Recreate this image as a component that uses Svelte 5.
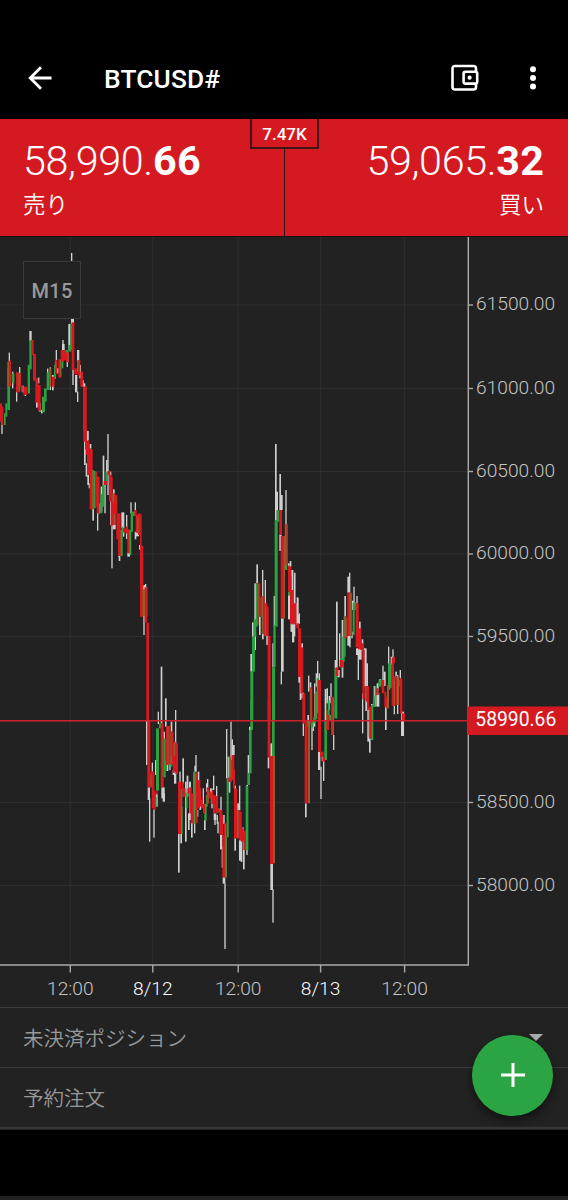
<script>
  const priceTicks = [
    [305, '61500.00'], [388.5, '61000.00'], [471.5, '60500.00'], [554, '60000.00'],
    [636.5, '59500.00'], [802.5, '58500.00'], [885.5, '58000.00']
  ];
  const timeTicks = [
    [70.3, '12:00', false], [152.8, '8/12', true], [238.2, '12:00', false],
    [320.6, '8/13', true], [404.6, '12:00', false]
  ];

  // Sections of the price history. Each bar is [x, top, bottom, width] in thirds of a pixel;
  // the section origin is in pixels.
  const sections = [
    {
      x: 0, y: 235,
      w: [[213,54,78,4],[4,540,597,4],[26,353,380,4],[36,410,460,4],[48,470,500,4],[57,396,415,4],[67,452,472,4],[74,475,483,4],[88,288,318,7],[99,357,362,6],[113,428,445,5],[108,500,518,5],[117,505,530,5],[123,525,535,5],[141,401,440,4],[149,397,465,4],[156,420,466,5],[167,345,380,4],[171,400,415,5],[187,315,345,4],[186,327,352,8],[193,345,370,5],[200,375,396,4],[205,267,345,6],[213,250,267,9],[217,405,450,4],[225,420,472,7],[231,470,501,4],[231,345,378,7],[238,390,430,5],[245,435,455,6],[251,445,460,5],[260,588,620,5]],
      g: [[12,535,570,5],[16,505,545,6],[22,400,525,8],[35,415,445,8],[83,390,475,7],[88,315,403,7],[126,485,532,9],[132,460,500,8],[140,412,465,7],[162,390,432,6],[184,350,400,6],[197,345,375,7],[205,330,350,9],[211,265,345,6]],
      r: [[0,505,560,6],[4,515,570,6],[25,377,455,8],[48,412,472,8],[56,415,455,7],[62,452,470,6],[70,455,480,12],[94,315,360,7],[99,357,437,9],[106,430,503,9],[114,450,528,8],[156,425,455,8],[165,375,418,7],[175,373,428,9],[182,345,380,10],[192,345,376,6],[198,353,382,9],[215,262,405,8],[223,400,418,9],[233,375,422,8],[241,410,455,8],[249,455,590,10],[252,585,618,8],[256,617,660,12]],
      o: [[22,380,455,5],[55,415,470,5],[149,400,455,5],[164,380,400,5],[180,375,425,4],[202,350,380,4],[231,377,410,5]]
    },
    {
      x: 75, y: 370,
      w: [[27,210,285,5],[32,280,320,6],[36,183,210,5],[37,310,345,5],[41,340,355,4],[44,222,236,5],[52,415,452,5],[66,425,482,4],[71,400,430,5],[77,350,425,5],[83,257,350,5],[88,340,430,4],[93,270,310,5],[97,192,375,4],[102,305,315,7],[105,380,465,4],[109,465,595,4],[114,358,374,5],[113,465,478,9],[129,505,560,5],[131,555,573,5],[139,427,475,9],[144,485,500,4],[153,435,507,4],[157,548,560,8],[166,397,430,4],[179,397,430,4],[179,485,508,5],[183,487,499,9],[192,525,539,6],[205,645,660,8]],
      g: [[57,303,415,5],[76,372,430,6],[81,345,410,7],[91,305,345,8],[135,480,558,8],[140,470,490,5],[164,480,555,5],[167,425,485,7],[173,425,438,6]],
      r: [[25,50,215,10],[30,215,238,9],[36,235,315,10],[44,237,418,9],[60,305,410,7],[65,320,430,9],[86,333,345,10],[98,303,315,8],[102,315,395,8],[107,320,467,6],[111,370,465,10],[119,375,430,8],[124,430,508,7],[129,430,558,8],[144,475,487,10],[152,470,490,6],[157,478,550,7],[178,420,438,7],[182,435,488,8],[189,430,495,7],[195,433,740,5],[195,528,740,10],[208,652,740,10]],
      o: [[51,300,417,6],[112,372,395,6],[116,432,465,6],[186,440,490,5],[162,480,550,3]]
    },
    {
      x: 110, y: 580,
      w: [[100,20,165,4],[105,12,28,4],[108,420,555,5],[113,622,660,7],[117,655,785,4],[125,548,575,4],[130,688,773,4],[135,540,585,5],[137,640,680,6],[143,395,432,4],[152,260,430,5],[154,622,655,10],[158,640,665,7],[160,455,480,5],[165,355,440,5],[169,555,573,6],[178,550,570,4],[182,425,455,5],[188,570,585,8],[192,575,611,7],[195,390,492,4],[204,760,878,5],[208,575,610,4],[211,760,790,5],[217,535,610,5],[225,605,785,5],[230,587,650,5],[237,605,720,6],[234,700,750,5],[243,715,773,5],[252,730,760,4],[253,557,575,5],[256,525,575,4],[263,575,600,5],[260,690,710,5],[268,680,690,5]],
      g: [[119,595,622,4],[133,650,680,7],[138,445,632,9],[147,430,445,6],[160,475,592,7],[166,540,570,5],[179,528,560,8],[213,680,762,5],[218,625,650,5],[227,638,685,6],[249,575,730,8]],
      r: [[91,0,108,8],[104,22,128,7],[109,128,422,8],[112,422,622,9],[121,575,622,7],[125,575,685,8],[131,632,690,6],[139,632,645,4],[152,430,622,9],[168,437,555,8],[175,438,552,7],[184,455,555,7],[189,485,578,8],[196,490,582,8],[204,605,762,9],[214,605,630,7],[218,625,650,9],[232,625,640,7],[238,622,700,7],[242,640,730,9],[255,577,730,8],[262,600,685,9]],
      o: [[97,28,108,8],[122,580,620,3],[157,480,590,3],[172,440,555,4],[181,455,550,4],[191,490,528,5],[212,627,710,5],[254,580,690,4]]
    },
    {
      x: 200, y: 700,
      w: [[0,300,326,4],[8,265,315,4],[12,360,390,5],[21,237,265,4],[18,250,275,4],[30,265,290,4],[34,265,325,4],[39,227,270,4],[41,340,360,8],[43,350,375,4],[48,258,290,4],[50,345,372,4],[52,365,400,4],[61,290,330,4],[60,405,448,7],[65,440,503,5],[69,345,372,5],[68,532,551,8],[73,550,747,4],[78,87,235,4],[83,170,235,4],[86,240,278,5],[91,65,180,4],[95,118,165,4],[98,135,165,6],[102,257,268,6],[103,415,452,5],[112,310,332,7],[117,257,330,4],[117,420,482,6],[122,420,486,5],[127,382,400,4],[129,420,508,5],[139,450,465,4],[143,165,220,5],[147,80,95,6],[139,255,270,5],[203,172,205,5],[211,130,170,5],[211,490,570,8],[217,568,668,4]],
      g: [[13,312,362,7],[18,285,320,5],[32,280,310,5],[55,325,338,5],[77,410,532,4],[80,235,412,6],[86,170,235,5],[94,180,235,5],[137,258,450,8],[142,220,255,8],[147,90,220,8],[151,0,90,8],[216,0,168,8]],
      r: [[0,265,320,4],[5,290,325,4],[9,312,340,6],[20,262,310,7],[26,275,295,8],[35,270,312,5],[39,285,340,8],[46,288,340,8],[52,325,335,6],[58,330,405,9],[65,345,405,5],[67,405,532,6],[72,370,532,4],[85,232,246,11],[96,165,240,7],[99,208,265,6],[102,265,415,9],[113,330,415,8],[118,335,422,7],[123,385,425,8],[130,393,450,8],[203,0,172,8],[210,168,492,9]],
      o: [[22,270,310,4],[75,370,532,4],[90,170,235,4],[111,330,415,5],[219,168,490,6]]
    },
    {
      x: 230, y: 430,
      w: [[61,672,725,5],[66,577,620,5],[73,460,660,5],[79,403,460,5],[87,560,615,5],[96,420,500,4],[96,610,628,5],[104,450,530,4],[109,617,645,8],[127,640,712,4],[131,498,590,4],[135,42,270,5],[138,185,240,6],[148,132,240,5],[152,195,240,6],[148,313,363,7],[166,180,285,4],[153,565,725,8],[152,725,763,4],[174,400,410,5],[179,393,410,4],[184,420,480,5],[174,488,568,8],[182,580,605,8],[186,585,637,7],[192,430,520,4],[199,520,585,5],[202,503,580,4],[206,550,580,4]],
      g: [[61,725,870,9],[66,620,725,9],[71,568,620,8],[77,460,590,6],[91,505,560,4],[126,712,870,9],[130,585,712,7],[134,270,590,9],[141,240,275,7],[162,405,420,10],[174,485,497,8]],
      r: [[83,460,560,8],[91,500,555,5],[98,500,612,6],[103,520,618,9],[110,530,618,6],[113,618,870,9],[148,240,315,8],[152,318,565,9],[164,283,405,10],[174,407,485,9],[182,440,580,8],[188,480,583,9],[194,520,580,6]],
      o: [[82,462,585,4],[95,500,612,4],[104,530,618,4],[160,318,565,5],[165,285,405,5]]
    },
    {
      x: 290, y: 560,
      w: [[0,3,20,4],[5,30,130,5],[12,38,150,4],[2,190,215,6],[7,190,245,5],[11,190,229,5],[20,112,190,4],[24,165,192,5],[25,350,368,8],[29,360,420,5],[34,250,265,5],[34,398,415,8],[38,490,528,4],[45,730,772,5],[54,347,395,4],[59,367,390,5],[52,465,495,5],[64,490,570,4],[68,480,513,4],[72,370,500,4],[77,340,380,6],[81,303,355,4],[86,340,362,4],[84,575,630,7],[91,620,717,4],[95,590,603,5],[99,600,663,4],[104,387,485,5],[109,385,430,5],[121,370,430,4],[116,408,450,4],[129,525,570,4],[138,125,350,5],[134,300,325,5],[147,220,320,4],[143,330,352,6],[155,180,353,5],[163,108,170,5],[172,50,98,5],[177,38,98,4],[172,228,257,8],[178,228,262,4],[184,215,235,4],[190,80,130,4],[186,122,150,4],[199,108,130,4],[207,185,215,5],[198,265,285,6],[203,265,360,4],[206,265,299,9],[216,400,520,4],[215,238,272,5],[222,265,380,8],[229,310,380,5],[226,418,453,5],[232,450,545,6],[237,535,578,5],[243,432,455,5],[251,378,440,6],[260,370,390,6],[259,400,440,9],[268,357,370,5],[277,317,370,4],[281,335,378,6],[285,425,510,5],[294,260,315,4],[302,290,315,5],[307,268,295,4],[311,435,463,4],[316,335,352,5],[321,345,462,4],[329,330,355,4],[333,455,528,9]],
      g: [[49,485,502,12],[64,480,502,6],[70,470,490,6],[75,395,478,7],[80,355,460,6],[103,480,600,8],[113,422,480,6],[118,465,480,5],[133,325,475,7],[138,325,475,4],[151,295,322,8],[157,230,305,7],[161,170,290,6],[188,130,225,6],[192,127,150,6],[243,435,540,7],[249,410,440,6],[254,378,410,5],[265,362,380,9],[294,310,390,6],[299,310,385,6],[270,358,375,5]],
      r: [[0,20,190,4],[3,90,193,8],[11,130,193,7],[19,190,205,8],[24,205,350,9],[31,262,400,9],[37,400,490,9],[44,485,730,9],[59,382,490,8],[84,360,575,9],[90,575,590,11],[97,592,605,8],[109,465,510,8],[123,410,525,9],[137,322,348,8],[149,300,322,10],[164,170,235,8],[172,98,228,9],[181,98,228,5],[197,130,262,9],[204,205,268,10],[211,250,270,9],[217,270,418,7],[228,378,425,7],[231,380,450,6],[237,440,535,8],[259,385,405,7],[275,360,400,8],[283,395,440,6],[287,410,445,7],[305,293,438,7],[309,290,310,6],[317,347,435,6],[323,360,380,8],[330,355,460,7],[335,460,482,10]],
      o: [[54,490,730,6],[61,385,490,4],[73,400,475,3],[108,450,485,5],[128,415,525,4],[165,175,230,5],[178,100,228,6],[225,378,418,4],[236,445,530,4],[261,385,405,4],[291,375,445,6],[311,350,438,5],[323,355,435,5]]
    }
  ];
  const layers = ['w', 'g', 'r', 'o'];
</script>

<main>
  <header>
    <svg class="back" width="26" height="26" viewBox="0 0 26 26"><path d="M24.500 13H3M14 2.200 3.200 13 14 23.800" /></svg>
    <h1>BTCUSD#</h1>
    <svg class="wallet" width="29" height="28" viewBox="0 0 29 28">
      <path d="M26 7.500V4.500Q26 2 23.500 2H5Q2.500 2 2.500 4.500V23Q2.500 25.500 5 25.500H23.500Q26 25.500 26 23V20" />
      <rect x="13.600" y="7.800" width="13.600" height="11.800" rx="1.800" />
      <circle cx="19.600" cy="13.700" r="2.100" />
    </svg>
    <svg class="more" width="8" height="26" viewBox="0 0 8 26">
      <circle cx="4" cy="4.200" r="3" /><circle cx="4" cy="12.900" r="3" /><circle cx="4" cy="21.600" r="3" />
    </svg>
  </header>

  <section class="quotes">
    <button class="quote sell"><span class="price">58,990.<b>66</b></span><span class="side">売り</span></button>
    <button class="quote buy"><span class="price">59,065.<b>32</b></span><span class="side">買い</span></button>
    <span class="spread">7.47K</span>
  </section>

  <section class="chart">
    <svg width="568" height="770" viewBox="0 237 568 770">
      <g class="grid">
        {#each priceTicks as [y]}<path d="M0 {y}H468" />{/each}
        {#each timeTicks as [x]}<path d="M{x} 237V965" />{/each}
      </g>
      {#each sections as s}
        <g transform="translate({s.x} {s.y}) scale(.33333)">
          {#each layers as layer}
            <g class={layer}>
              {#each s[layer] as [x, top, bottom, width]}
                <rect {x} y={top} {width} height={bottom - top} />
              {/each}
            </g>
          {/each}
        </g>
      {/each}
      <g class="axis">
        <path d="M468.300 237V965H0" />
        {#each priceTicks as [y]}<path d="M468 {y}h5" />{/each}
        {#each timeTicks as [x]}<path d="M{x} 965v7.500" />{/each}
      </g>
      {#each priceTicks as [y, label]}<text class="label" x="476" y={y + 5}>{label}</text>{/each}
      {#each timeTicks as [x, label, day]}<text class="label time" class:day {x} y="995.300">{label}</text>{/each}
      <path class="current" d="M0 720.700H468" />
      <rect class="tag" x="467.500" y="706.500" width="101" height="28.500" />
      <text class="tag-text" x="475.300" y="726.300">58990.66</text>
    </svg>
    <span class="period">M15</span>
  </section>

  <section class="orders">
    <div class="row"><span>未決済ポジション</span><i class="caret"></i></div>
    <div class="row"><span>予約注文</span></div>
    <div class="edge"></div>
  </section>
  <div class="navigation"></div>
  <button class="add" aria-label="+"><svg width="24" height="24" viewBox="0 0 24 24"><path d="M12 0V24M0 12H24" /></svg></button>
</main>

<style>
  :global(body) { margin: 0; background: #222; }
  main {
    position: relative; width: 568px; height: 1200px; overflow: hidden;
    display: flex; flex-direction: column; background: #222; color: #fff;
    font-family: Roboto, "Noto Sans CJK JP", sans-serif;
  }
  button { border: 0; margin: 0; font: inherit; color: inherit; }
  header {
    box-sizing: border-box; height: 119px; flex: none; padding: 37px 31px 0 27px;
    display: flex; align-items: center; background: #000;
  }
  h1 { margin: 1px auto 0 51px; font-size: 26.300px; line-height: 32px; font-weight: 500; letter-spacing: .15px; }
  header svg, .add svg { display: block; fill: none; stroke: #fff; }
  .back { stroke-width: 2.8; }
  .wallet { stroke-width: 2.6; margin-right: 50.500px; }
  .wallet circle, .more circle { fill: #fff; stroke: none; }
  .quotes { position: relative; display: grid; grid-template-columns: 285px 283px; height: 118px; flex: none; background: #141414; }
  .quote {
    height: 117px; padding: 17px 24px 0 23px; display: flex; flex-direction: column;
    align-items: flex-start; background: #d51920; box-sizing: border-box;
  }
  .sell { border-right: 1.500px solid #2c1516; }
  .buy { align-items: flex-end; }
  .price { font-size: 41.300px; line-height: 50px; font-weight: 300; letter-spacing: -0.350px; }
  .price b { font-weight: 700; letter-spacing: .3px; margin-right: -0.300px; }
  .side { font-size: 22.500px; line-height: 32px; margin-top: 3px; font-weight: 350; }
  .spread {
    position: absolute; left: 250px; top: 0; width: 69px; height: 30px; box-sizing: border-box;
    border: 2px solid #3f1517; border-top: 0; background: #d51920;
    font-size: 17px; line-height: 30px; font-weight: 500; text-align: center;
  }
  .chart { position: relative; height: 770px; flex: none; }
  .chart svg { display: block; }
  .chart path { fill: none; }
  .grid { stroke: #2e2e2e; stroke-width: 1; }
  .w { fill: #cfcfcf; }
  .g { fill: #2aa242; }
  .r { fill: #d81920; }
  .o { fill: #95592e; }
  .chart .axis { stroke: #aaa; stroke-width: 1.4; }
  .label { font-size: 19.200px; font-weight: 300; fill: #c4c4c4; }
  .time { text-anchor: middle; }
  .day { fill: #fff; }
  .current { stroke: #d0202b; stroke-width: 1.6; }
  .tag { fill: #d51920; }
  .tag-text { font-size: 19.300px; font-weight: 400; fill: #fff; }
  .period {
    position: absolute; left: 23px; top: 24px; width: 58px; height: 58px; box-sizing: border-box;
    border: 1.500px solid #3a3a3a; background: #222; color: #999;
    font-size: 20px; line-height: 58px; font-weight: 500; text-align: center; letter-spacing: .3px;
  }
  .orders { height: 123px; flex: none; color: #999; font-size: 20.500px; }
  .row {
    box-sizing: border-box; height: 60px; padding: 0 25px 0 23px; border-top: 1.500px solid #3b3b3b;
    display: flex; align-items: center; justify-content: space-between; font-weight: 350;
  }
  .row span { font-family: "Noto Sans CJK JP", sans-serif; line-height: 30px; padding-bottom: 1px; }
  .caret { border: 7px solid transparent; border-top-color: #aaa; border-bottom: 0; }
  .edge { height: 3px; box-sizing: border-box; border-top: 2px solid #383838; }
  .navigation { height: 66px; flex: none; background: #000; }
  .add {
    position: absolute; left: 472px; top: 1034.500px; width: 81px; height: 81px; border-radius: 50%; padding: 0;
    display: flex; align-items: center; justify-content: center; background: #2ba544;
    box-shadow: 0 5px 10px #0007;
  }
  .add svg { stroke-width: 3; }
</style>
